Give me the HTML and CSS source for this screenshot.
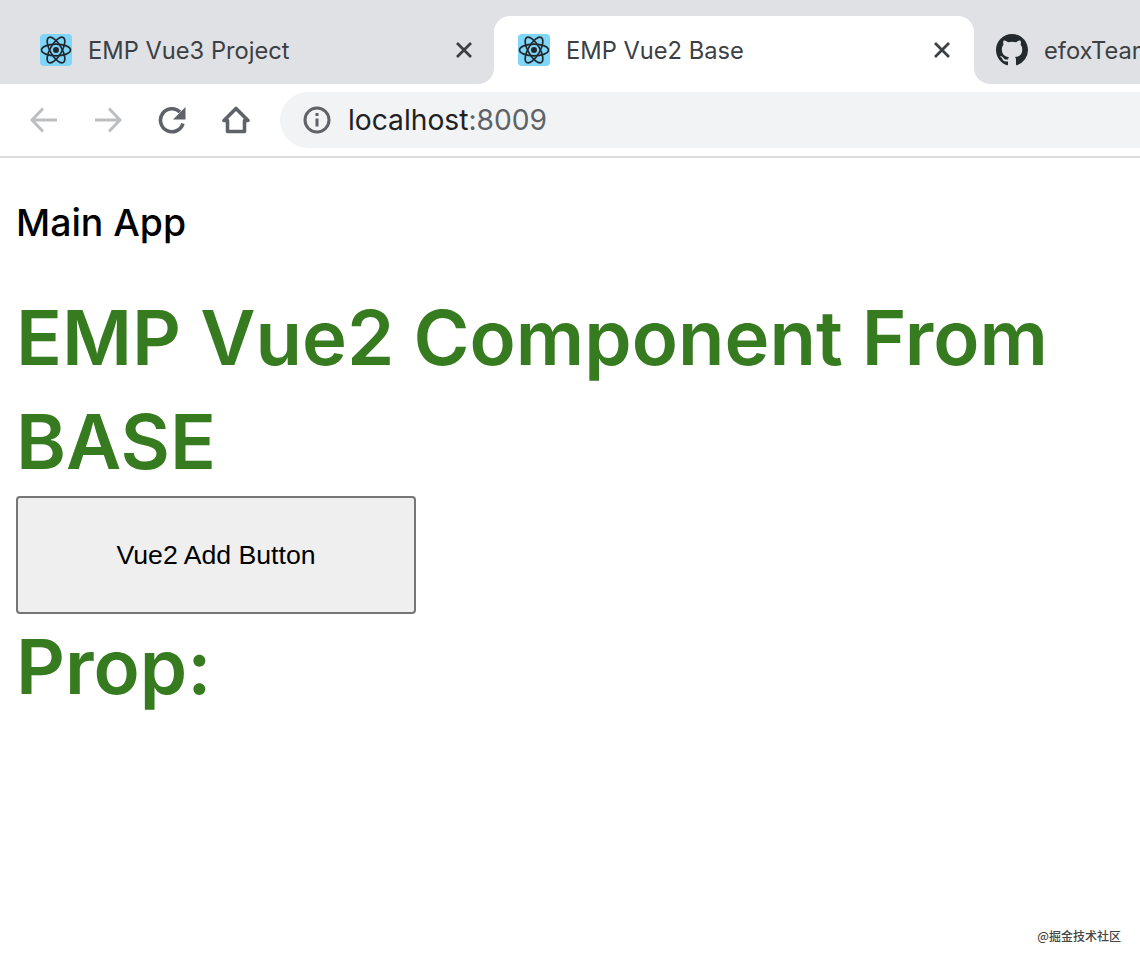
FILE: index.html
```html
<!DOCTYPE html>
<html lang="en">
<head>
    <meta charset="UTF-8">
    <meta name="viewport" content="width=device-width, initial-scale=1">
    <title>EMP Vue2 Base</title>
    <link rel="stylesheet" href="styles.css">
</head>
<body>
    <div class="browser-tabs">
        <div class="tab tab-first">
            <svg class="favicon" viewBox="0 0 32 32">
                <rect width="32" height="32" rx="4" fill="#7fd6f9"/>
                <g fill="none" stroke="#20282e" stroke-width="1.7">
                    <ellipse cx="16" cy="16" rx="14.500" ry="5.800"/>
                    <ellipse cx="16" cy="16" rx="14.500" ry="5.800" transform="rotate(60 16 16)"/>
                    <ellipse cx="16" cy="16" rx="14.500" ry="5.800" transform="rotate(120 16 16)"/>
                </g>
                <circle cx="16" cy="16" r="3" fill="#20282e"/>
            </svg>
            <span class="tab-title">EMP Vue3 Project</span>
            <svg class="tab-close" viewBox="0 0 16 16"><path d="M1 1l14 14M15 1L1 15"/></svg>
        </div>
        <div class="tab-active-wrap">
            <div class="tab tab-active">
                <svg class="favicon" viewBox="0 0 32 32">
                    <rect width="32" height="32" rx="4" fill="#7fd6f9"/>
                    <g fill="none" stroke="#20282e" stroke-width="1.7">
                        <ellipse cx="16" cy="16" rx="14.500" ry="5.800"/>
                        <ellipse cx="16" cy="16" rx="14.500" ry="5.800" transform="rotate(60 16 16)"/>
                        <ellipse cx="16" cy="16" rx="14.500" ry="5.800" transform="rotate(120 16 16)"/>
                    </g>
                    <circle cx="16" cy="16" r="3" fill="#20282e"/>
                </svg>
                <span class="tab-title">EMP Vue2 Base</span>
                <svg class="tab-close" viewBox="0 0 16 16"><path d="M1 1l14 14M15 1L1 15"/></svg>
            </div>
        </div>
        <div class="tab tab-last">
            <svg class="favicon" viewBox="0 0 16 16"><path fill="#24292e" d="M8 0C3.58 0 0 3.58 0 8c0 3.54 2.29 6.53 5.47 7.59.4.07.55-.17.55-.38 0-.19-.01-.82-.01-1.49-2.01.37-2.53-.49-2.69-.94-.09-.23-.48-.94-.82-1.13-.28-.15-.68-.52-.01-.53.63-.01 1.08.58 1.23.82.72 1.21 1.87.87 2.33.66.07-.52.28-.87.51-1.07-1.78-.2-3.64-.89-3.64-3.95 0-.87.31-1.59.82-2.15-.08-.2-.36-1.02.08-2.12 0 0 .67-.21 2.2.82.64-.18 1.32-.27 2-.27s1.36.09 2 .27c1.53-1.04 2.2-.82 2.2-.82.44 1.1.16 1.92.08 2.12.51.56.82 1.27.82 2.15 0 3.07-1.87 3.75-3.65 3.95.29.25.54.73.54 1.48 0 1.07-.01 1.93-.01 2.2 0 .21.15.46.55.38A8.01 8.01 0 0 0 16 8c0-4.42-3.58-8-8-8z"/></svg>
            <span class="tab-title">efoxTeam/emp</span>
        </div>
    </div>
    <div class="toolbar">
        <svg class="nav-icon nav-disabled" viewBox="0 0 28 28"><path d="M27 14H2.500M13 2.500L2 14l11 11.500"/></svg>
        <svg class="nav-icon nav-disabled" viewBox="0 0 28 28"><path d="M1 14h24.500M15 2.500L26 14 15 25.500"/></svg>
        <svg class="nav-icon nav-dark" viewBox="0 0 28 28"><path d="M25 17.500A11.500 11.500 0 1 1 22 6"/><path class="nav-fill" d="M27.500 1V13.500H15z"/></svg>
        <svg class="nav-icon nav-dark" viewBox="0 0 28 28"><path stroke-linejoin="round" d="M14 2.500L2 14.500H5.500V25.500H22.500V14.500H26z"/></svg>
        <div class="omnibox">
            <svg class="info-icon" viewBox="0 0 28 28"><circle cx="14" cy="14" r="12"/><path d="M14 12.500V20.500"/><path d="M14 7V10"/></svg>
            <span class="url">localhost<span class="url-port">:8009</span></span>
        </div>
    </div>
    <div class="page">
        <h2 class="main-title">Main App</h2>
        <h1 class="green-title">EMP Vue2 Component From BASE</h1>
        <button class="add-button">Vue2 Add Button</button>
        <h1 class="green-title">Prop:</h1>
    </div>
    <div class="watermark">@掘金技术社区</div>
</body>
</html>
```

FILE: styles.css
```css
html, body {
    margin: 0;
    height: 960px;
    overflow: hidden;
    background: #fff;
}
body {
    font-family: Inter, "Liberation Sans", sans-serif;
    position: relative;
}
.browser-tabs {
    display: flex;
    height: 84px;
    overflow: hidden;
}
.tab {
    display: flex;
    align-items: center;
    box-sizing: border-box;
    flex: none;
    height: 84px;
    padding-top: 16px;
    background: #dfe1e5;
}
.tab-first {
    width: 494px;
    padding-left: 40px;
    padding-right: 22px;
    border-bottom-right-radius: 16px;
}
.tab-active-wrap {
    flex: none;
    width: 480px;
    height: 84px;
    padding-top: 16px;
    box-sizing: border-box;
    background: #dfe1e5;
}
.tab-active {
    width: 480px;
    height: 68px;
    padding: 0 24px;
    background: #fff;
    border-radius: 16px 16px 0 0;
}
.tab-last {
    flex: 1;
    padding-left: 22px;
    border-bottom-left-radius: 16px;
    white-space: nowrap;
}
.favicon {
    width: 32px;
    height: 32px;
    flex: none;
}
.tab-title {
    margin-left: 16px;
    font-size: 23.7px;
    color: #3c4043;
    flex: 1;
}
.tab-close {
    width: 16px;
    height: 16px;
    flex: none;
    fill: none;
    stroke: #3c4043;
    stroke-width: 2.8;
}
.toolbar {
    display: flex;
    align-items: center;
    height: 72px;
    padding-left: 30px;
    border-bottom: 2px solid #dadce0;
}
.nav-icon {
    width: 28px;
    height: 28px;
    margin-right: 36px;
    flex: none;
    fill: none;
    stroke: #5f6368;
    stroke-width: 3;
}
.nav-dark {
    stroke-width: 3.6;
}
.nav-disabled {
    stroke: #bcbec0;
}
.nav-fill {
    fill: #5f6368;
    stroke: none;
}
.omnibox {
    display: flex;
    align-items: center;
    flex: 1;
    height: 56px;
    margin-left: -6px;
    margin-right: -40px;
    padding-left: 23px;
    background: #f1f3f4;
    border-radius: 28px;
}
.info-icon {
    width: 28px;
    height: 28px;
    fill: none;
    stroke: #5f6368;
    stroke-width: 3;
}
.url {
    margin-left: 17px;
    font-size: 28.2px;
    color: #202124;
}
.url-port {
    color: #5f6368;
}
.page {
    padding: 0 16px;
}
.main-title {
    margin: 41px 0 0;
    font-size: 37.44px;
    line-height: 48px;
    font-weight: 500;
    color: #000;
}
.green-title {
    margin: 0;
    font-size: 76px;
    line-height: 104px;
    font-weight: 600;
    color: #377b21;
}
.main-title + .green-title {
    margin-top: 38px;
    margin-bottom: 3px;
}
.add-button {
    display: block;
    width: 400px;
    height: 118px;
    padding: 0;
    background: #efefef;
    border: 2px solid #767676;
    border-radius: 4px;
    font-family: "Liberation Sans", sans-serif;
    font-size: 26.67px;
    color: #000;
}
.watermark {
    position: absolute;
    right: 19px;
    top: 929px;
    font-family: "Noto Sans CJK SC", sans-serif;
    font-size: 12px;
    line-height: 14px;
    font-weight: 500;
    color: #444;
}
```
